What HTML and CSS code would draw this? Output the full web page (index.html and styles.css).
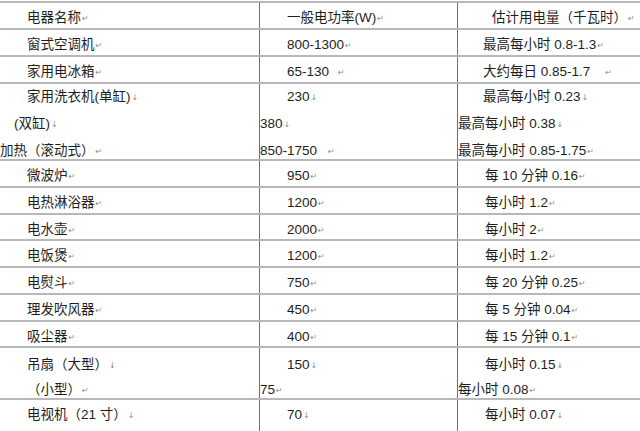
FILE: index.html
```html
<!DOCTYPE html>
<html lang="zh">
<head>
<meta charset="utf-8">
<title>电器耗电量表</title>
<link rel="stylesheet" href="styles.css">
</head>
<body>
<div class="table">
  <div class="row h27">
    <div class="c1"><div class="ln">电器名称<span class="m">↵</span></div></div>
    <div class="c2"><div class="ln">一般电功率(W)<span class="m">↵</span></div></div>
    <div class="c3"><div class="ln hd3">估计用电量（千瓦时）<span class="m">↵</span></div></div>
  </div>
  <div class="row h27">
    <div class="c1"><div class="ln">窗式空调机<span class="m">↵</span></div></div>
    <div class="c2"><div class="ln">800-1300<span class="m">↵</span></div></div>
    <div class="c3"><div class="ln">最高每小时 0.8-1.3<span class="m">↵</span></div></div>
  </div>
  <div class="row h27">
    <div class="c1"><div class="ln">家用电冰箱<span class="m">↵</span></div></div>
    <div class="c2"><div class="ln">65-130<span class="gap3"></span><span class="m">↵</span></div></div>
    <div class="c3"><div class="ln">大约每日 0.85-1.7<span class="gap2"></span><span class="m">↵</span></div></div>
  </div>
  <div class="row h77 multi">
    <div class="c1">
      <div class="ln">家用洗衣机(单缸)<span class="m">↓</span></div>
      <div class="ln o13">(双缸)<span class="m">↓</span></div>
      <div class="ln o27">加热（滚动式）<span class="m">↵</span></div>
    </div>
    <div class="c2">
      <div class="ln">230<span class="m">↓</span></div>
      <div class="ln o27">380<span class="m">↓</span></div>
      <div class="ln o27">850-1750<span class="gap4"></span><span class="m">↵</span></div>
    </div>
    <div class="c3">
      <div class="ln">最高每小时 0.23<span class="m">↓</span></div>
      <div class="ln o26">最高每小时 0.38<span class="m">↓</span></div>
      <div class="ln o26">最高每小时 0.85-1.75<span class="m">↵</span></div>
    </div>
  </div>
  <div class="row h27">
    <div class="c1"><div class="ln">微波炉<span class="m">↵</span></div></div>
    <div class="c2"><div class="ln">950<span class="m">↵</span></div></div>
    <div class="c3"><div class="ln i2">每 10 分钟 0.16<span class="m">↵</span></div></div>
  </div>
  <div class="row h27">
    <div class="c1"><div class="ln">电热淋浴器<span class="m">↵</span></div></div>
    <div class="c2"><div class="ln">1200<span class="m">↵</span></div></div>
    <div class="c3"><div class="ln i2">每小时 1.2<span class="m">↵</span></div></div>
  </div>
  <div class="row h26">
    <div class="c1"><div class="ln">电水壶<span class="m">↵</span></div></div>
    <div class="c2"><div class="ln">2000<span class="m">↵</span></div></div>
    <div class="c3"><div class="ln i2">每小时 2<span class="m">↵</span></div></div>
  </div>
  <div class="row h27">
    <div class="c1"><div class="ln">电饭煲<span class="m">↵</span></div></div>
    <div class="c2"><div class="ln">1200<span class="m">↵</span></div></div>
    <div class="c3"><div class="ln i2">每小时 1.2<span class="m">↵</span></div></div>
  </div>
  <div class="row h27">
    <div class="c1"><div class="ln">电熨斗<span class="m">↵</span></div></div>
    <div class="c2"><div class="ln">750<span class="m">↵</span></div></div>
    <div class="c3"><div class="ln i2">每 20 分钟 0.25<span class="m">↵</span></div></div>
  </div>
  <div class="row h27">
    <div class="c1"><div class="ln">理发吹风器<span class="m">↵</span></div></div>
    <div class="c2"><div class="ln">450<span class="m">↵</span></div></div>
    <div class="c3"><div class="ln i2">每 5 分钟 0.04<span class="m">↵</span></div></div>
  </div>
  <div class="row h26">
    <div class="c1"><div class="ln">吸尘器<span class="m">↵</span></div></div>
    <div class="c2"><div class="ln">400<span class="m">↵</span></div></div>
    <div class="c3"><div class="ln i2">每 15 分钟 0.1<span class="m">↵</span></div></div>
  </div>
  <div class="row h52 fan">
    <div class="c1">
      <div class="ln">吊扇（大型）<span class="m">↓</span></div>
      <div class="ln">（小型）<span class="m">↵</span></div>
    </div>
    <div class="c2">
      <div class="ln">150<span class="m">↓</span></div>
      <div class="ln o27">75<span class="m">↵</span></div>
    </div>
    <div class="c3">
      <div class="ln i2">每小时 0.15<span class="m">↓</span></div>
      <div class="ln o26">每小时 0.08<span class="m">↵</span></div>
    </div>
  </div>
  <div class="row h33">
    <div class="c1"><div class="ln">电视机（21 寸）<span class="m">↓</span></div></div>
    <div class="c2"><div class="ln">70<span class="m">↓</span></div></div>
    <div class="c3"><div class="ln i2">每小时 0.07<span class="m">↓</span></div></div>
  </div>
</div>
</body>
</html>
```

FILE: styles.css
```css
html, body {
  margin: 0;
  padding: 0;
  background: #ffffff;
}

body {
  padding-top: 1px;
  width: 640px;
  height: 431px;
  overflow: hidden;
  font-family: "Liberation Sans", "Noto Sans CJK SC", sans-serif;
  font-size: 13.5px;
  color: #1e1e1e;
}

.table {
  display: flex;
  flex-direction: column;
}

.row {
  display: grid;
  grid-template-columns: 259px 198px 1fr;
  border-top: 2px solid #b8b8b8;
  box-sizing: border-box;
}

.h27 { height: 27px; }
.h26 { height: 26px; }
.h77 { height: 77px; }
.h52 { height: 52px; }
.h33 { height: 34px; }

.c1, .c2, .c3 {
  padding-top: 4px;
  white-space: nowrap;
}

.c1 { padding-left: 27px; }
.c2 { padding-left: 27px; border-left: 1px solid #707070; }
.c3 { padding-left: 25px; border-left: 1px solid #707070; }

.ln {
  line-height: 22px;
}

.multi .c1, .multi .c2, .multi .c3 { padding-top: 0; }
.multi .ln { line-height: 26px; }

.fan .c1, .fan .c2, .fan .c3 { padding-top: 5px; }
.fan .ln { line-height: 24px; }

.hd3 { margin-left: 9px; }
.i2 { margin-left: 2px; }
.o13 { margin-left: -13px; }
.o26 { margin-left: -25px; }
.o27 { margin-left: -27px; }

.m {
  font-family: "DejaVu Sans", sans-serif;
  font-size: 8px;
  color: #8c8c8c;
  margin-left: 1px;
  vertical-align: 1px;
}

.gap2 { display: inline-block; width: 14px; }
.gap3 { display: inline-block; width: 8px; }
.gap4 { display: inline-block; width: 10px; }
```
